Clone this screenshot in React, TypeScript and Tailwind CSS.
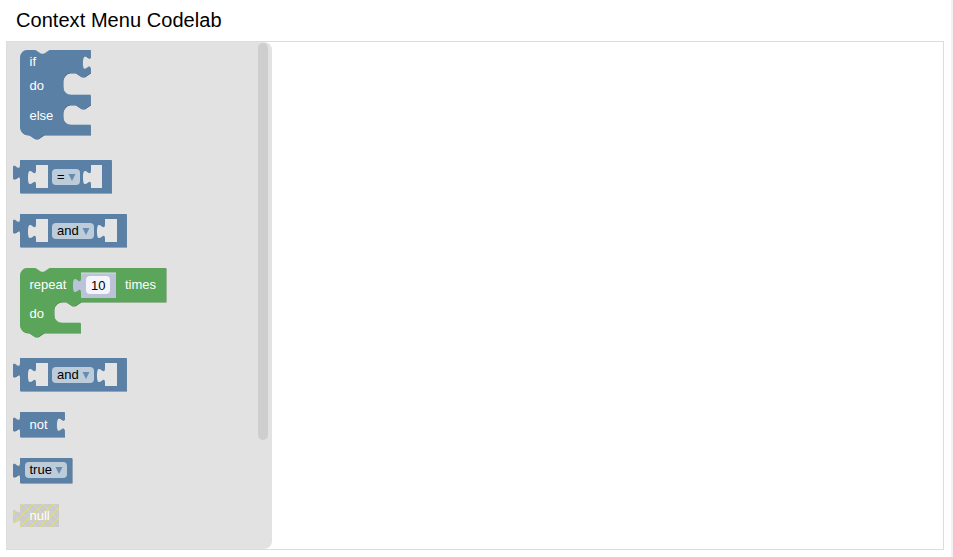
const BLUE = { fill: "#5b80a5", dark: "#496684", light: "#8ca6c0" };
const GREEN = { fill: "#5ba55b", dark: "#498449", light: "#8cc08c" };
const TAB_OUT = "c0,-10 -8,8 -8,-7.5 s8,2.5 8,-7.5";
const TAB_IN = "c0,10 -8,-8 -8,7.5 s8,-2.5 8,7.5";

function Label({ x, y, children, fill = "#fff" }: { x: number; y: number; children: string; fill?: string }) {
  return (
    <text x={x} y={y} fill={fill} fontSize={13} fontFamily="'Liberation Sans', Arial, sans-serif">
      {children}
    </text>
  );
}

function Shape({ d, c }: { d: string; c: typeof BLUE }) {
  return (
    <g>
      <path d={d} fill={c.dark} transform="translate(0.5,0.5)" />
      <path d={d} fill={c.light} transform="translate(0,-0.5)" />
      <path d={d} fill={c.fill} />
    </g>
  );
}

function Hole({ x, y, w, h }: { x: number; y: number; w: number; h: number }) {
  return <path d={`M${x},${y} H${x + w} V${y + h} H${x} V${y + 20} ${TAB_OUT} z`} fill="#e4e4e4" />;
}

function Dropdown({ x, y, w, label, tx }: { x: number; y: number; w: number; label: string; tx: number }) {
  const ax = x + w - 11.5;
  return (
    <g>
      <rect x={x} y={y} width={w} height={16} rx={4} fill="#bdccdb" />
      <Label x={tx} y={y + 12} fill="#000">{label}</Label>
      <path d={`M${ax},${y + 5} h7 l-3.5,7 z`} fill="#5b80a5" opacity={0.85} />
    </g>
  );
}

function Block({ w, h, mt, children }: { w: number; h: number; mt: string; children: React.ReactNode }) {
  return (
    <svg width={w} height={h} viewBox={`0 0 ${w} ${h}`} className={`block shrink-0 ${mt}`}>
      {children}
    </svg>
  );
}

function IfBlock() {
  const d =
    `M7,8 a8,8 0 0 1 8,-8 h7 l6,4 h3 l6,-4 H77.5 v5 ${TAB_IN} v3 l-6,4 h-3 l-6,-4 h-5.5 a8,8 0 0 0 -7,8 v6 a8,8 0 0 0 8,8 H77.5 v10 ` +
    `l-6,4 h-3 l-6,-4 h-5.5 a8,8 0 0 0 -7,8 v4 a8,8 0 0 0 8,8 H77.5 v10 H31 l-6,4 h-3 l-6,-4 H15 a8,8 0 0 1 -8,-8 z`;
  return (
    <Block w={90} h={92} mt="mt-0">
      <Shape d={d} c={BLUE} />
      <Label x={16.5} y={16}>if</Label>
      <Label x={16.5} y={40}>do</Label>
      <Label x={16.5} y={70}>else</Label>
    </Block>
  );
}

function Value({ right, mt, children, h = 33 }: { right: number; mt: string; children: React.ReactNode; h?: number }) {
  const d = `M7,0 H${right} V${h} H7 V20 ${TAB_OUT} z`;
  return (
    <Block w={right + 3} h={h + 2} mt={mt}>
      <Shape d={d} c={BLUE} />
      {children}
    </Block>
  );
}

function AndBlock({ mt }: { mt: string }) {
  return (
    <Value right={113.5} mt={mt}>
      <Hole x={23} y={5} w={12} h={23} />
      <Dropdown x={39} y={9} w={42} label="and" tx={44} />
      <Hole x={92} y={5} w={12} h={23} />
    </Value>
  );
}

function RepeatBlock() {
  const d =
    `M7,8 a8,8 0 0 1 8,-8 h7 l6,4 h3 l6,-4 H153 V34 H68 l-6,4 h-3 l-6,-4 h-4 a8,8 0 0 0 -8,7 v6 a8,8 0 0 0 8,8 H67.5 v10 ` +
    `H31 l-6,4 h-3 l-6,-4 H15 a8,8 0 0 1 -8,-8 z`;
  return (
    <Block w={158} h={72} mt="mt-[19px]">
      <Shape d={d} c={GREEN} />
      <Label x={16.5} y={21}>repeat</Label>
      <path d="M68,5 H103 V30 H68 V25 c0,-10 -8,8 -8,-7.5 s8,2.5 8,-7.5 z" fill="#bdc2db" />
      <path d="M68,5 H103" stroke="#dadcea" strokeWidth={1} fill="none" />
      <rect x={73} y={8} width={24} height={18} rx={4} fill="#f4f5fa" />
      <Label x={78} y={22} fill="#000">10</Label>
      <Label x={112} y={21}>times</Label>
      <Label x={16.5} y={50}>do</Label>
    </Block>
  );
}

function NotBlock() {
  const d = `M7,0 H51.5 v5 ${TAB_IN} V25 H7 V20 ${TAB_OUT} z`;
  return (
    <Block w={56} h={27} mt="mt-[19px]">
      <Shape d={d} c={BLUE} />
      <Label x={16.5} y={17}>not</Label>
    </Block>
  );
}

function TrueBlock() {
  return (
    <Value right={59} h={25} mt="mt-[19px]">
      <Dropdown x={12} y={4} w={42} label="true" tx={16.5} />
    </Value>
  );
}

function NullBlock() {
  const d = `M7,0 H46 V23 H7 V20 ${TAB_OUT} z`;
  return (
    <Block w={50} h={25} mt="mt-[19px]">
      <defs>
        <pattern id="disabled" width="10" height="10" patternUnits="userSpaceOnUse">
          <rect width="10" height="10" fill="#cccccc" />
          <path d="M0,0 L10,10 M10,0 L0,10" stroke="#e0dd7c" strokeWidth="1" />
        </pattern>
      </defs>
      <path d={d} fill="url(#disabled)" />
      <Label x={16.5} y={16}>null</Label>
    </Block>
  );
}

export default function App() {
  return (
    <div className="flex h-[557px] w-[953px] overflow-hidden bg-white font-['Liberation_Sans',Arial,sans-serif]">
      <div className="flex w-[951px] shrink-0 flex-col">
        <h1 className="flex h-[41px] items-center pb-0.5 pl-4 text-xl font-normal tracking-[0.05px] text-black">Context Menu Codelab</h1>
        <div className="ml-1.5 flex h-[509px] w-[938px] border border-[#dddddd]">
          <div className="relative flex w-[265px] flex-col rounded-r-lg bg-[#e2e2e2] pl-1.5 pt-2">
            <IfBlock />
            <Value right={98.5} mt="mt-[18px]">
              <Hole x={23} y={5} w={12} h={23} />
              <Dropdown x={39} y={9} w={28} label="=" tx={44} />
              <Hole x={78} y={5} w={11} h={23} />
            </Value>
            <AndBlock mt="mt-[19px]" />
            <RepeatBlock />
            <AndBlock mt="mt-[18px]" />
            <NotBlock />
            <TrueBlock />
            <NullBlock />
            <div className="absolute left-[251px] top-px h-[397px] w-2.5 rounded-[5px] bg-[#cecece]" />
          </div>
        </div>
      </div>
      <div className="w-0.5 bg-[#f1f1f1]" />
    </div>
  );
}
